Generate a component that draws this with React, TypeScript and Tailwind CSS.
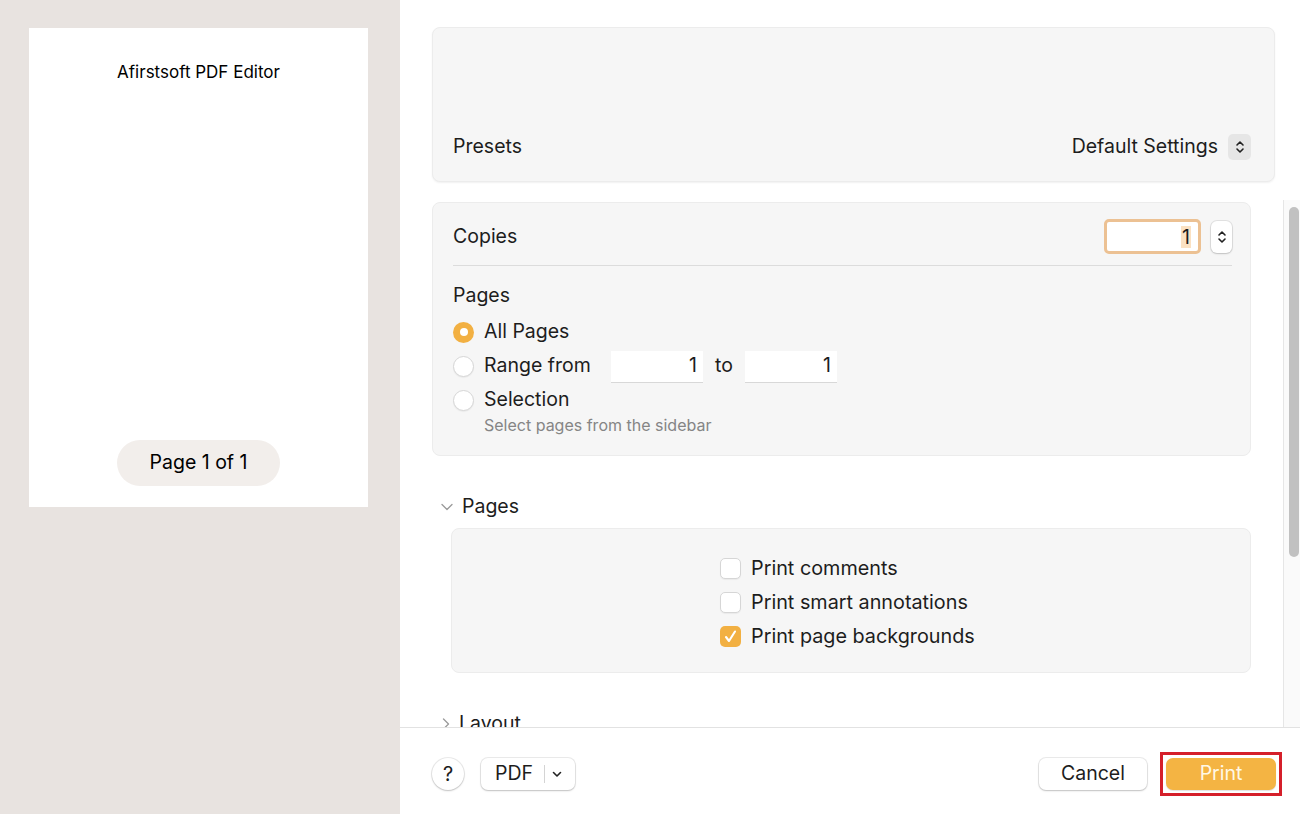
import React from 'react';

const font = { fontFamily: 'Inter, "Liberation Sans", sans-serif' };

function Radio({ checked }: { checked?: boolean }) {
  if (checked) {
    return (
      <span className="flex h-[21px] w-[21px] items-center justify-center rounded-full bg-[#f2b042]">
        <span className="h-[8px] w-[8px] rounded-full bg-white" />
      </span>
    );
  }
  return <span className="h-[21px] w-[21px] rounded-full border border-[#d6d6d6] bg-white shadow-[0_1px_1px_rgba(0,0,0,0.05)]" />;
}

function Checkbox({ checked }: { checked?: boolean }) {
  if (checked) {
    return (
      <span className="flex h-[21px] w-[21px] items-center justify-center rounded-[5px] bg-[#f2b042]">
        <svg width="15" height="15" viewBox="0 0 15 15" fill="none">
          <path d="M3 8 L6 12 L12 2.5" stroke="white" strokeWidth="2.1" strokeLinecap="round" strokeLinejoin="round" />
        </svg>
      </span>
    );
  }
  return <span className="h-[21px] w-[21px] rounded-[5px] border border-[#d6d6d6] bg-white shadow-[0_1px_1px_rgba(0,0,0,0.05)]" />;
}

function UpDown({ size = 10 }: { size?: number }) {
  return (
    <svg width={size} height={size * 1.6} viewBox="0 0 10 16" fill="none">
      <path d="M2 6 L5 3 L8 6" stroke="#222" strokeWidth="1.6" strokeLinecap="round" strokeLinejoin="round" />
      <path d="M2 10 L5 13 L8 10" stroke="#222" strokeWidth="1.6" strokeLinecap="round" strokeLinejoin="round" />
    </svg>
  );
}

export default function App() {
  return (
    <div className="flex h-[814px] w-[1300px] overflow-hidden text-[#1d1d1d]" style={font}>
      {/* preview */}
      <div className="w-[400px] shrink-0 bg-[#e8e3e0] pl-[29px] pt-[28px]">
        <div className="flex h-[479px] w-[339px] flex-col items-center bg-white">
          <div className="mt-[33px] text-[17px] leading-[22px] text-black">Afirstsoft PDF Editor</div>
          <div className="mt-auto mb-[21px] flex h-[46px] w-[163px] items-center justify-center rounded-full bg-[#f2eeeb] text-[19.5px] text-black">
            Page 1 of 1
          </div>
        </div>
      </div>

      {/* settings */}
      <div className="flex flex-1 flex-col bg-white">
        <div className="pl-[32px] pr-[25px] pt-[27px]">
          <div className="flex h-[155px] items-end rounded-[8px] border border-[#ececec] bg-[#f6f6f6] pb-[21px] pl-[20px] pr-[23px] shadow-[0_1px_2px_rgba(0,0,0,0.06)]">
            <div className="flex h-[26px] w-full items-center justify-between text-[19.5px]">
              <span>Presets</span>
              <div className="flex items-center gap-[10px]">
                <span>Default Settings</span>
                <span className="flex h-[26px] w-[23px] items-center justify-center rounded-[5px] bg-[#e6e6e6]">
                  <UpDown size={10} />
                </span>
              </div>
            </div>
          </div>
        </div>

        <div className="mt-[18px] flex min-h-0 flex-1">
          <div className="min-w-0 flex-1 overflow-hidden pl-[32px] pr-[32px] pt-[2px]">
            {/* copies & pages */}
            <div className="h-[254px] rounded-[8px] border border-[#ececec] bg-[#f6f6f6] pl-[20px] pr-[18px] pt-[16px]">
              <div className="flex h-[35px] items-center justify-between text-[19.5px]">
                <span>Copies</span>
                <div className="flex items-center gap-[10px]">
                  <div className="flex h-[35px] w-[97px] items-center justify-end rounded-[5px] border-[3px] border-[#ecc193] bg-white pr-[7px]">
                    <span className="bg-[#fbe1c2] px-[1px] leading-[22px]">1</span>
                  </div>
                  <span className="flex h-[32px] w-[21px] flex-col items-center justify-center rounded-[6px] bg-white shadow-[0_0_0_1px_rgba(0,0,0,0.08),0_1px_2px_rgba(0,0,0,0.15)]">
                    <UpDown size={10} />
                  </span>
                </div>
              </div>
              <div className="mt-[11px] h-px bg-[#dcdcdc]" />
              <div className="mt-[17px] text-[19.5px] leading-[24px]">Pages</div>
              <div className="mt-[12px] flex flex-col gap-[8px] text-[19.5px]">
                <div className="flex h-[26px] items-center gap-[10px]">
                  <Radio checked />
                  <span>All Pages</span>
                </div>
                <div className="flex h-[26px] items-center gap-[10px]">
                  <Radio />
                  <span className="w-[117px]">Range from</span>
                  <div className="flex h-[31px] w-[92px] items-center justify-end bg-white pr-[6px] shadow-[0_1px_0_rgba(0,0,0,0.12)]">1</div>
                  <span className="mx-[2px]">to</span>
                  <div className="flex h-[31px] w-[92px] items-center justify-end bg-white pr-[6px] shadow-[0_1px_0_rgba(0,0,0,0.12)]">1</div>
                </div>
                <div className="flex h-[26px] items-center gap-[10px]">
                  <Radio />
                  <span>Selection</span>
                </div>
              </div>
              <div className="ml-[31px] mt-[2px] text-[16px] leading-[20px] text-[#858585]">Select pages from the sidebar</div>
            </div>

            {/* pages disclosure */}
            <div className="mt-[38px] flex h-[26px] items-center gap-[9px] pl-[9px] text-[19.5px]">
              <svg width="12" height="8" viewBox="0 0 12 8" fill="none">
                <path d="M1 1.5 L6 6.5 L11 1.5" stroke="#9a9a9a" strokeWidth="1.3" strokeLinecap="round" strokeLinejoin="round" />
              </svg>
              <span>Pages</span>
            </div>
            <div className="ml-[19px] mt-[8px] flex h-[145px] flex-col items-center justify-center rounded-[8px] border border-[#ececec] bg-[#f6f6f6] pt-[4px] text-[19.8px]">
              <div className="flex w-[262px] flex-col gap-[13px]">
                <div className="flex h-[21px] items-center gap-[10px]">
                  <Checkbox />
                  <span>Print comments</span>
                </div>
                <div className="flex h-[21px] items-center gap-[10px]">
                  <Checkbox />
                  <span>Print smart annotations</span>
                </div>
                <div className="flex h-[21px] items-center gap-[10px]">
                  <Checkbox checked />
                  <span>Print page backgrounds</span>
                </div>
              </div>
            </div>

            <div className="mt-[38px] flex h-[26px] items-center gap-[9px] pl-[10px] text-[19.5px]">
              <svg width="8" height="12" viewBox="0 0 8 12" fill="none">
                <path d="M1.5 1 L6.5 6 L1.5 11" stroke="#9a9a9a" strokeWidth="1.3" strokeLinecap="round" strokeLinejoin="round" />
              </svg>
              <span>Layout</span>
            </div>
          </div>

          {/* scrollbar */}
          <div className="w-[17px] shrink-0 border-l border-[#e6e6e6] bg-[#fafafa] pl-[5px] pr-[1px] pt-[7px]">
            <div className="h-[350px] w-[10px] rounded-full bg-[#c1c1c1]" />
          </div>
        </div>

        {/* footer */}
        <div className="flex h-[87px] shrink-0 items-center border-t border-[#e2e2e2] bg-white pl-[32px] pr-[18px] pt-[6px]">
          <span className="flex h-[32px] w-[32px] items-center justify-center rounded-full bg-white text-[20px] shadow-[0_0_0_1px_rgba(0,0,0,0.08),0_1px_2px_rgba(0,0,0,0.18)]">?</span>
          <div className="ml-[17px] flex h-[32px] w-[94px] items-center rounded-[7px] bg-white text-[19.5px] shadow-[0_0_0_1px_rgba(0,0,0,0.08),0_1px_2px_rgba(0,0,0,0.18)]">
            <span className="pl-[14px]">PDF</span>
            <span className="ml-[11px] h-[18px] w-px bg-[#d4d4d4]" />
            <svg className="ml-[7px]" width="10" height="7" viewBox="0 0 10 7" fill="none">
              <path d="M1.5 1.5 L5 5 L8.5 1.5" stroke="#222" strokeWidth="1.6" strokeLinecap="round" strokeLinejoin="round" />
            </svg>
          </div>
          <div className="ml-auto flex h-[32px] w-[108px] items-center justify-center rounded-[7px] bg-white text-[19.5px] shadow-[0_0_0_1px_rgba(0,0,0,0.08),0_1px_2px_rgba(0,0,0,0.18)]">
            Cancel
          </div>
          <div className="ml-[13px] border-[3px] border-[#d51f2a] p-[3px]">
            <div className="flex h-[32px] w-[110px] items-center justify-center rounded-[7px] bg-[#f4b443] text-[19.5px] text-[#fff8e6] shadow-[0_1px_1px_rgba(0,0,0,0.12)]">
              Print
            </div>
          </div>
        </div>
      </div>
    </div>
  );
}
